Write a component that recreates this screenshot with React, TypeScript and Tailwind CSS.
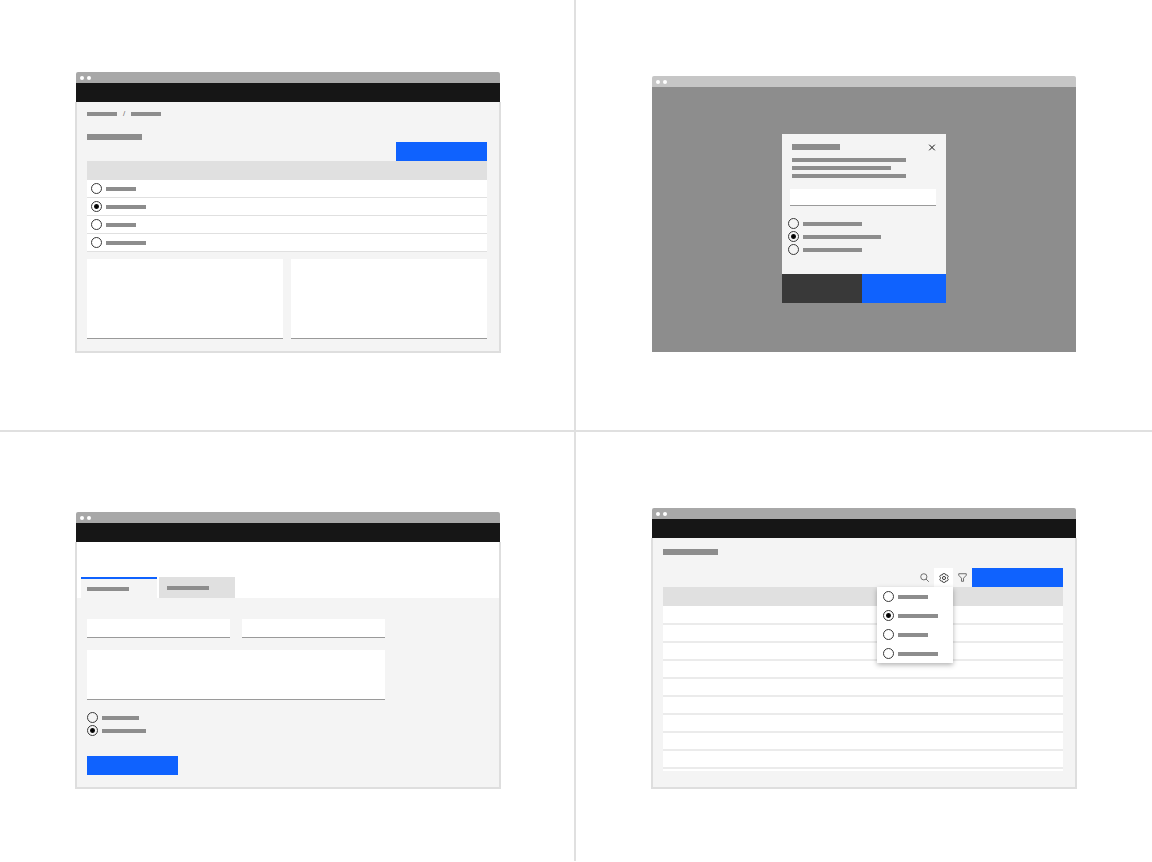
import type { ReactNode } from "react";
import clsx from "clsx";

const FIELD =
  "block resize-none border-b border-[#9a9a9a] bg-white outline-none";

function Bar({ className }: { className: string }) {
  return <span className={clsx("block shrink-0 bg-[#8d8d8d]", className)} />;
}

function TitleBar({ className }: { className: string }) {
  return (
    <div
      className={clsx(
        "flex h-[11px] items-center gap-[3px] rounded-t-[2px] pl-1",
        className
      )}
    >
      <span className="size-1 rounded-full bg-white" />
      <span className="size-1 rounded-full bg-white" />
    </div>
  );
}

function AppWindow({
  className,
  children,
}: {
  className?: string;
  children: ReactNode;
}) {
  return (
    <section>
      <TitleBar className="bg-[#a8a8a8]" />
      <header className="h-[19px] bg-[#161616]" />
      <div
        className={clsx(
          "-mx-px border-x-2 border-b-2 border-[#dedede] bg-[#f4f4f4]",
          className
        )}
      >
        {children}
      </div>
    </section>
  );
}

function Radio({
  name,
  label,
  width,
  checked,
}: {
  name: string;
  label: string;
  width: string;
  checked?: boolean;
}) {
  return (
    <label className="flex items-center gap-1">
      <input
        type="radio"
        name={name}
        aria-label={label}
        defaultChecked={checked}
        className="size-[11px] shrink-0 appearance-none rounded-full border border-[#393939] checked:bg-[radial-gradient(circle,#000_1px,#161616_2px,transparent_3px)]"
      />
      <Bar className={clsx("h-1", width)} />
    </label>
  );
}

const options = [
  { label: "Option 1", width: "w-[30px]" },
  { label: "Option 2", width: "w-10", checked: true },
  { label: "Option 3", width: "w-[30px]" },
  { label: "Option 4", width: "w-10" },
];

function TablePage() {
  return (
    <AppWindow className="pt-[9px] pr-3 pb-3 pl-[10px]">
      <nav aria-label="Breadcrumb" className="flex h-[5px] items-center">
        <a href="#parent" aria-label="Parent page">
          <Bar className="h-1 w-[30px]" />
        </a>
        <span className="w-[14px] text-center font-['Liberation_Sans',sans-serif] text-[8px] leading-[5px] text-[#6f6f6f]">
          /
        </span>
        <a href="#current" aria-label="Current page">
          <Bar className="h-1 w-[30px]" />
        </a>
      </nav>
      <Bar className="mt-[18px] h-[6px] w-[55px]" />
      <div className="mt-[2px] flex justify-end">
        <button
          type="button"
          aria-label="Primary action"
          className="h-[19px] w-[91px] bg-[#0f62fe]"
        />
      </div>
      <table className="w-full border-separate border-spacing-0">
        <thead>
          <tr>
            <th aria-label="Name" className="h-[19px] bg-[#e0e0e0] p-0" />
          </tr>
        </thead>
        <tbody>
          {options.map((option) => (
            <tr key={option.label}>
              <td className="h-[18px] border-b border-[#e0e0e0] bg-white p-0 pl-1">
                <Radio name="row" {...option} />
              </td>
            </tr>
          ))}
        </tbody>
      </table>
      <div className="mt-[7px] flex gap-2">
        <textarea
          aria-label="Details"
          className={clsx(FIELD, "h-20 min-w-0 flex-1")}
        />
        <textarea
          aria-label="Notes"
          className={clsx(FIELD, "h-20 min-w-0 flex-1")}
        />
      </div>
    </AppWindow>
  );
}

function DialogPage() {
  return (
    <section>
      <TitleBar className="bg-[#c6c6c6]" />
      <div className="flex justify-center bg-[#8d8d8d] pt-[47px] pb-[49px]">
        <div role="dialog" aria-label="Form" className="w-[164px] bg-[#f4f4f4]">
          <div className="flex items-start justify-between pt-[7px] pr-2 pl-[10px]">
            <Bar className="mt-[3px] h-[6px] w-12" />
            <button type="button" aria-label="Close" className="size-3">
              <svg viewBox="0 0 12 12" className="size-3">
                <path d="M3.2 3.7l5.6 5.6M8.8 3.7l-5.6 5.6" stroke="#161616" strokeWidth="1" />
              </svg>
            </button>
          </div>
          <div className="mt-[5px] flex flex-col gap-1 pl-[10px]">
            <Bar className="h-1 w-[114px]" />
            <Bar className="h-1 w-[99px]" />
            <Bar className="h-1 w-[114px]" />
          </div>
          <div className="mt-[11px] pr-[10px] pl-2">
            <input
              type="text"
              aria-label="Name"
              className={clsx(FIELD, "h-[17px] w-full")}
            />
          </div>
          <div className="mt-3 flex flex-col gap-[2px] pl-[6px]">
            <Radio name="dialog" label="Option 1" width="w-[59px]" />
            <Radio name="dialog" label="Option 2" width="w-[78px]" checked />
            <Radio name="dialog" label="Option 3" width="w-[59px]" />
          </div>
          <div className="mt-[19px] flex h-[29px]">
            <button type="button" aria-label="Cancel" className="w-20 bg-[#393939]" />
            <button type="button" aria-label="Submit" className="flex-1 bg-[#0f62fe]" />
          </div>
        </div>
      </div>
    </section>
  );
}

function TabbedForm() {
  return (
    <AppWindow>
      <div role="tablist" className="flex gap-[2px] bg-white pt-[35px] pl-1">
        <button
          type="button"
          role="tab"
          aria-selected="true"
          aria-label="First tab"
          className="h-[21px] w-[76px] border-t-2 border-[#0f62fe] bg-[#f4f4f4] pl-[6px]"
        >
          <Bar className="h-1 w-[42px]" />
        </button>
        <button
          type="button"
          role="tab"
          aria-selected="false"
          aria-label="Second tab"
          className="h-[21px] w-[76px] bg-[#e0e0e0] pl-2"
        >
          <Bar className="h-1 w-[42px]" />
        </button>
      </div>
      <form className="pt-[21px] pr-3 pb-3 pl-[10px]">
        <div className="max-w-[298px]">
          <div className="flex gap-3">
            <input
              type="text"
              aria-label="First name"
              className={clsx(FIELD, "h-[19px] min-w-0 flex-1")}
            />
            <input
              type="text"
              aria-label="Last name"
              className={clsx(FIELD, "h-[19px] min-w-0 flex-1")}
            />
          </div>
          <textarea
            aria-label="Description"
            className={clsx(FIELD, "mt-3 h-[50px] w-full")}
          />
        </div>
        <div className="mt-3 flex flex-col gap-[2px]">
          <Radio name="form" label="Option 1" width="w-[37px]" />
          <Radio name="form" label="Option 2" width="w-11" checked />
        </div>
        <button
          type="button"
          aria-label="Save"
          className="mt-5 block h-[19px] w-[91px] bg-[#0f62fe]"
        />
      </form>
    </AppWindow>
  );
}

function SearchIcon() {
  return (
    <svg viewBox="0 0 32 32" className="size-[11px]" fill="none" stroke="#525252" strokeWidth="2.4">
      <circle cx="14" cy="14" r="9" />
      <path d="M20.5 20.5L28.5 28.5" />
    </svg>
  );
}

function SettingsIcon() {
  return (
    <svg viewBox="0 0 32 32" className="size-[10px]" fill="none" stroke="#161616" strokeWidth="2.6">
      <path d="M27 16.76c0-.25 0-.5 0-.76s0-.51 0-.77l1.92-1.68A2 2 0 0 0 29.3 11L26.94 7a2 2 0 0 0-2.37-.9l-2.43.82a11.35 11.35 0 0 0-1.31-.75l-.51-2.52a2 2 0 0 0-2-1.61h-4.68a2 2 0 0 0-2 1.61l-.51 2.52a11.48 11.48 0 0 0-1.32.75l-2.38-.86A2 2 0 0 0 5.06 7L2.7 11a2 2 0 0 0 .41 2.51L5 15.24v1.53l-1.89 1.68A2 2 0 0 0 2.7 21l2.36 4a2 2 0 0 0 2.37.9l2.43-.82a11.35 11.35 0 0 0 1.31.75l.51 2.52a2 2 0 0 0 2 1.61h4.72a2 2 0 0 0 2-1.61l.51-2.52a11.48 11.48 0 0 0 1.32-.75l2.34.82a2 2 0 0 0 2.37-.9l2.36-4a2 2 0 0 0-.41-2.51z" />
      <circle cx="16" cy="16" r="5" />
    </svg>
  );
}

function FilterIcon() {
  return (
    <svg viewBox="0 0 32 32" className="size-[11px]" fill="none" stroke="#525252" strokeWidth="2.4">
      <path d="M5 5h22v4.5l-8 8.5v9h-6v-9L5 9.5z" strokeLinejoin="round" />
    </svg>
  );
}

function SettingsMenu() {
  return (
    <div className="relative">
      <button
        type="button"
        aria-label="Settings"
        className="flex size-[19px] items-center justify-center bg-white"
      >
        <SettingsIcon />
      </button>
      <div className="absolute top-full right-0 z-10 w-[76px] bg-white pl-[6px] shadow-[0_2px_5px_rgba(0,0,0,0.3)]">
        {options.map((option) => (
          <div key={option.label} className="flex h-[19px] items-center">
            <Radio name="menu" {...option} />
          </div>
        ))}
      </div>
    </div>
  );
}

function ToolbarPage() {
  const rows = Array.from({ length: 9 }, (_, i) => i);

  return (
    <AppWindow className="pt-[11px] pr-3 pb-4 pl-[10px]">
      <Bar className="h-[6px] w-[55px]" />
      <div className="mt-[13px] flex justify-end">
        <button
          type="button"
          aria-label="Search"
          className="flex size-[19px] items-center justify-center"
        >
          <SearchIcon />
        </button>
        <SettingsMenu />
        <button
          type="button"
          aria-label="Filter"
          className="flex size-[19px] items-center justify-center"
        >
          <FilterIcon />
        </button>
        <button
          type="button"
          aria-label="Primary action"
          className="h-[19px] w-[91px] bg-[#0f62fe]"
        />
      </div>
      <table className="w-full border-separate border-spacing-0 border-b-2 border-white">
        <thead>
          <tr>
            <th
              aria-label="Name"
              className="h-5 border-b border-white bg-[#e0e0e0] p-0"
            />
          </tr>
        </thead>
        <tbody>
          {rows.map((row) => (
            <tr key={row}>
              <td className="h-[18px] border-b-2 border-[#ebebeb] bg-white p-0" />
            </tr>
          ))}
        </tbody>
      </table>
    </AppWindow>
  );
}

export default function App() {
  return (
    <main className="grid grid-cols-2 bg-white">
      <div className="border-r-2 border-b-2 border-[#e0e0e0] pt-18 pr-[74px] pb-[77px] pl-19">
        <TablePage />
      </div>
      <div className="border-b-2 border-[#e0e0e0] px-19 pt-19">
        <DialogPage />
      </div>
      <div className="border-r-2 border-[#e0e0e0] pt-20 pr-[74px] pb-18 pl-19">
        <TabbedForm />
      </div>
      <div className="px-19 pt-19">
        <ToolbarPage />
      </div>
    </main>
  );
}
